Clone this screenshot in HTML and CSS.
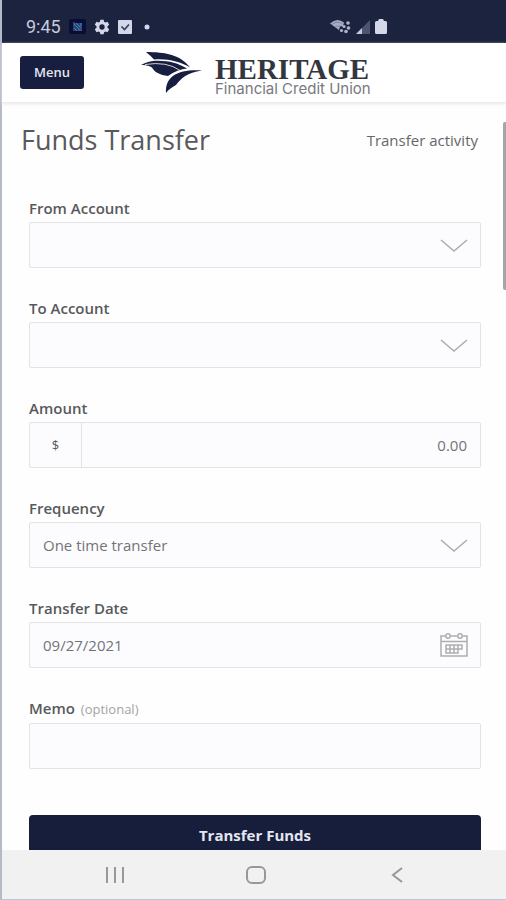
FILE: index.html
```html
<!DOCTYPE html>
<html lang="en">
<head>
<meta charset="utf-8">
<meta name="viewport" content="width=device-width, initial-scale=1">
<title>Funds Transfer</title>
<link rel="stylesheet" href="styles.css">
</head>
<body>
<div class="screen">
  <div class="status">
    <div class="status-left">
      <span class="clock">9:45</span>
      <svg width="17" height="15" viewBox="0 0 17 15" aria-hidden="true"><rect width="17" height="15" rx="2" fill="#0a0d35"/><path d="M4 4h9v8H4z" fill="#214775"/><path d="M5 5l6 6M7 4l5 5M5 9l3 3M12 4v3" stroke="#4c82b0" stroke-width="1"/><path d="M4 4h2M9 11h4" stroke="#8b477f"/></svg>
      <svg width="16" height="16" viewBox="0 0 24 24" aria-hidden="true"><path fill="#d4d7e8" fill-rule="evenodd" d="M9.500 1h5l.6 3.300 2 1.100 3.200-1.200 2.500 4.300-2.600 2.200v2.600l2.600 2.200-2.500 4.300-3.200-1.200-2 1.100-.6 3.300h-5l-.6-3.300-2-1.100-3.200 1.200-2.500-4.300 2.600-2.200v-2.600L1.200 8.500l2.500-4.300 3.200 1.200 2-1.100zM12 8a4 4 0 1 0 0 8 4 4 0 0 0 0-8z"/></svg>
      <svg width="14" height="14" viewBox="0 0 14 14" aria-hidden="true"><rect width="14" height="14" rx="1" fill="#d4d7e8"/><path d="M3.500 6.500l3 3 4.500-5" fill="none" stroke="#343b59" stroke-width="1.600"/></svg>
      <svg class="dot" width="6" height="6" viewBox="0 0 6 6" aria-hidden="true"><circle cx="3" cy="3" r="2.500" fill="#d4d7e8"/></svg>
    </div>
    <div class="status-right">
      <svg width="21" height="15" viewBox="0 0 21 15" aria-hidden="true"><path d="M0 4.500Q7-2 14 3.500L13 7l-3 .5-1 3.500z" fill="#a7acc2"/><path d="M2 5.500q5-4 10-1M5 8q3-2 5-.5" fill="none" stroke="#808699"/><g fill="#b0b4c9"><circle cx="18" cy="4" r="1.800"/><circle cx="14" cy="7.500" r="1.600"/><circle cx="18.500" cy="9" r="1.800"/><circle cx="11.500" cy="11.500" r="1.600"/><circle cx="16" cy="12.500" r="1.800"/></g></svg>
      <svg width="14" height="14" viewBox="0 0 14 14" aria-hidden="true"><path d="M0 14L14 0v14z" fill="#4d5470"/><path d="M0 14l6-6v6z" fill="#c3c7db"/></svg>
      <svg width="12" height="15" viewBox="0 0 12 15" aria-hidden="true"><path d="M4 0h4l1 2h1.500Q12 2 12 3.500v10q0 1.500-1.500 1.500h-9Q0 15 0 13.500v-10Q0 2 1.500 2H3z" fill="#d4d7e8"/></svg>
    </div>
  </div>

  <header class="bar">
    <button class="menu" type="button">Menu</button>
    <div class="brand">
      <svg width="62" height="42" viewBox="0 0 62 42" aria-hidden="true"><g fill="#171e40"><path d="M5 0C24 0 40 3 49 15.500 39 9.500 27 6.500 13 7.500 11 5 8 2.500 5 0z"/><path d="M0 13C5 10.500 9 9 14 8.800 27 8.300 37 11 46 16.500 40 17 33 19.500 27 24 19 23 13 20 11 15.500 8 13.500 4 13 0 13z"/><path d="M25 41C24 23 39 17 61 18.500 46 21 40 26 35 33 31 35 27 38 25 41z"/></g><path d="M4 12.500Q26 9 39 18.500" fill="none" stroke="#fff" stroke-width=".8"/></svg>
      <div class="brand-text">
        <span class="brand-name">HERITAGE</span>
        <span class="brand-sub">Financial Credit Union</span>
      </div>
    </div>
  </header>

  <main class="content">
    <div class="heading">
      <h1>Funds Transfer</h1>
      <a href="#activity">Transfer activity</a>
    </div>
    <form class="form">
      <div class="fields">
        <div class="field">
          <label for="from">From Account</label>
          <div class="control">
            <select id="from"><option></option></select>
            <svg class="chevron" width="28" height="14" viewBox="0 0 28 14" aria-hidden="true"><path d="M1 2l13 11L27 2"/></svg>
          </div>
        </div>
        <div class="field">
          <label for="to">To Account</label>
          <div class="control">
            <select id="to"><option></option></select>
            <svg class="chevron" width="28" height="14" viewBox="0 0 28 14" aria-hidden="true"><path d="M1 2l13 11L27 2"/></svg>
          </div>
        </div>
        <div class="field">
          <label for="amount">Amount</label>
          <div class="control">
            <span class="prefix">$</span>
            <input class="amount" id="amount" type="text" value="0.00">
          </div>
        </div>
        <div class="field">
          <label for="frequency">Frequency</label>
          <div class="control">
            <select id="frequency"><option>One time transfer</option></select>
            <svg class="chevron" width="28" height="14" viewBox="0 0 28 14" aria-hidden="true"><path d="M1 2l13 11L27 2"/></svg>
          </div>
        </div>
        <div class="field">
          <label for="date">Transfer Date</label>
          <div class="control">
            <input id="date" type="text" value="09/27/2021">
            <svg class="chevron" width="28" height="24" viewBox="0 0 28 24" aria-hidden="true"><path d="M5 3H1v20h26V3h-4M11 3h6M1 8.500h26"/><circle cx="8" cy="3" r="2.200"/><circle cx="20" cy="3" r="2.200"/><path d="M6 12h16v4h-4v4H6zM6 16h12M10 12v8M14 12v8M18 12v4"/></svg>
          </div>
        </div>
        <div class="field">
          <label for="memo">Memo <span class="optional">(optional)</span></label>
          <div class="control"><input id="memo" type="text"></div>
        </div>
      </div>
      <button class="submit" type="submit">Transfer Funds</button>
    </form>
    <div class="thumb"></div>
  </main>

  <nav class="nav">
    <button type="button" aria-label="Recent apps"><svg width="20" height="18" viewBox="0 0 20 18"><path d="M2 1v16M10 1v16M18 1v16"/></svg></button>
    <button type="button" aria-label="Home"><svg width="22" height="18" viewBox="0 0 22 18"><rect x="2" y="1" width="18" height="16" rx="5"/></svg></button>
    <button type="button" aria-label="Back"><svg width="12" height="18" viewBox="0 0 12 18"><path d="M11 2L2 9l9 7"/></svg></button>
  </nav>
</div>
</body>
</html>
```
FILE: styles.css
```css
* { box-sizing: border-box; }

body {
  margin: 0;
  background: #fefefe;
  color: #58595c;
  font-family: "Open Sans", "Noto Sans", sans-serif;
}

button, input, select { font: inherit; color: inherit; }

.screen {
  display: flex;
  flex-direction: column;
  min-height: 100vh;
  border-left: 2px solid #b4bac7;
  border-bottom: 1px solid #b5c9d9;
}

.status {
  display: grid;
  grid-template-columns: 1fr 176px;
  align-items: center;
  height: 43px;
  padding: 10px 0 0 24px;
  background: #1c233f;
}

.status-left, .status-right { display: flex; align-items: center; }
.status-left { gap: 8px; }
.status-right { gap: 5px; }
.clock { color: #c6cadc; font-family: Roboto, sans-serif; font-size: 18px; line-height: 20px; }
.dot { margin-left: 4px; }

.bar {
  display: flex;
  align-items: center;
  gap: 57px;
  height: 60px;
  padding: 0 18px;
  background: #fff;
  border-bottom: 1px solid #ececec;
  box-shadow: 0 1px 3px #e8e8e8;
}

.menu {
  width: 64px;
  height: 33px;
  padding: 0 0 2px;
  border: 0;
  border-radius: 3px;
  background: #171e40;
  color: #e4e6f0;
  font-size: 13px;
  font-weight: 600;
}

.brand { display: flex; align-items: center; gap: 12px; }
.brand-text { display: flex; flex-direction: column; padding-top: 4px; white-space: nowrap; }
.brand-name { color: #34363f; font: bold 29px/28px "Liberation Serif", serif; }
.brand-sub { color: #77797f; font: 15px/12px Inter, sans-serif; }

.content {
  position: relative;
  display: flex;
  flex: 1;
  flex-direction: column;
}

.heading {
  display: flex;
  align-items: center;
  justify-content: space-between;
  padding: 19px 28px 0 19px;
}

h1 { margin: 0; font-size: 27px; font-weight: 400; line-height: 36px; }
.heading a { color: #66676a; font-size: 15px; text-decoration: none; }

.form {
  display: flex;
  flex: 1;
  flex-direction: column;
  padding: 40px 25px 0 27px;
}

.fields {
  display: flex;
  flex: 1;
  flex-direction: column;
  justify-content: space-between;
}

.field { display: flex; flex-direction: column; gap: 4px; }
.field label { font-size: 15px; font-weight: 600; line-height: 20px; }
.field .optional { margin-left: 2px; color: #a2a3a6; font-size: 13px; font-weight: 400; }

.control {
  position: relative;
  display: flex;
  height: 46px;
  background: #fcfcfe;
  border: 1px solid #e2e3e5;
  border-radius: 2px;
}

.control input, .control select {
  flex: 1;
  width: 100%;
  min-width: 0;
  padding: 0 13px;
  border: 0;
  background: transparent;
  color: #737477;
  font-size: 15px;
  appearance: none;
}

.control .amount { text-align: right; }

.prefix {
  width: 52px;
  border-right: 1px solid #e2e3e5;
  font-size: 13px;
  line-height: 44px;
  text-align: center;
}

.chevron {
  position: absolute;
  right: 12px;
  top: 0;
  bottom: 0;
  margin: auto 0;
  fill: none;
  stroke: #adadaf;
  stroke-width: 1.5;
  pointer-events: none;
}

.submit {
  height: 35px;
  margin-top: 46px;
  padding: 4px 0 0;
  border: 0;
  border-radius: 4px 4px 0 0;
  background: #171e3b;
  color: #e4e6f0;
  font-size: 15px;
  font-weight: 700;
  line-height: 20px;
}

.thumb {
  position: absolute;
  top: 19px;
  right: 0;
  width: 3px;
  height: 168px;
  border-radius: 2px 0 0 2px;
  background: #a6a6a6;
}

.nav {
  display: flex;
  justify-content: space-around;
  height: 49px;
  padding: 0 38px 0 42px;
  background: #f1f1f2;
}

.nav button {
  display: flex;
  align-items: center;
  justify-content: center;
  width: 60px;
  padding: 0;
  border: 0;
  background: transparent;
}

.nav svg { fill: none; stroke: #98989b; stroke-width: 2; }
```
